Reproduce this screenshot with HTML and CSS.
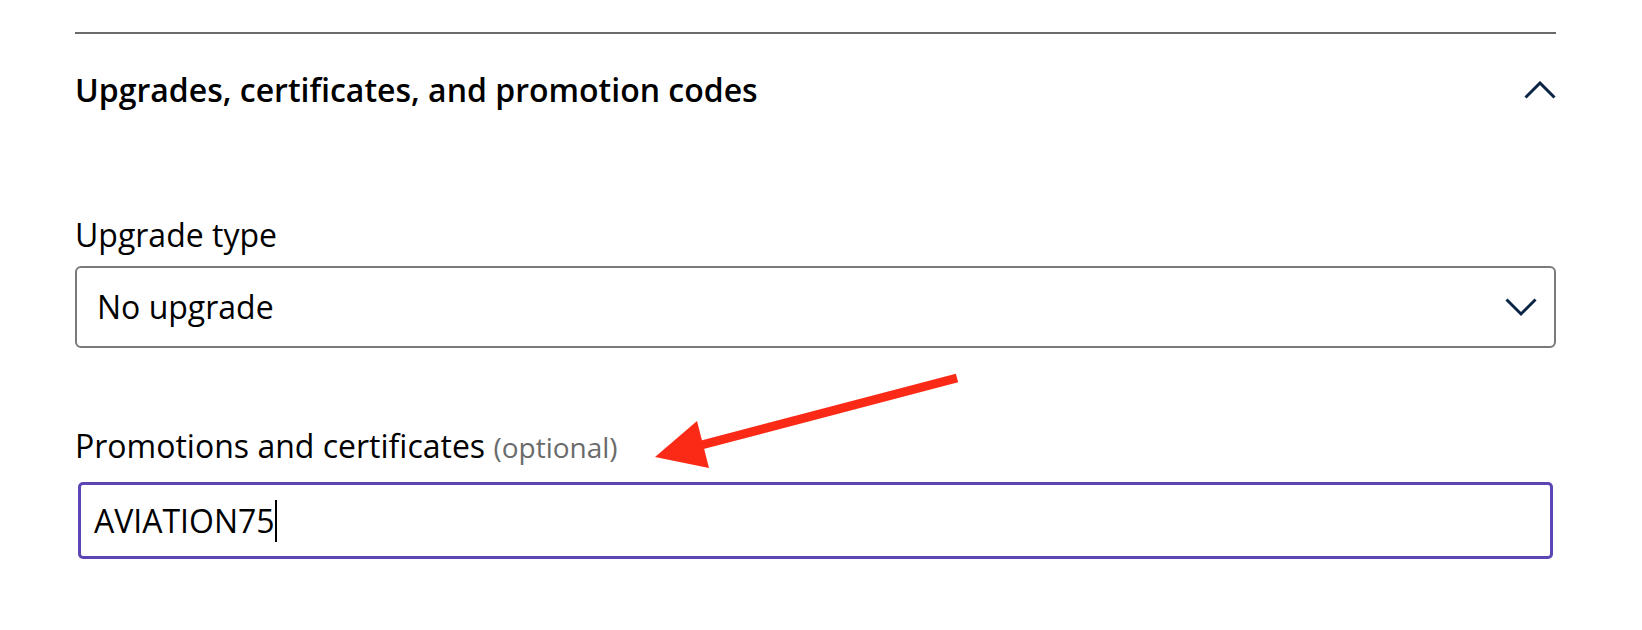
FILE: index.html
```html
<!DOCTYPE html>
<html lang="en">
<head>
<meta charset="utf-8">
<title>Upgrades, certificates, and promotion codes</title>
<link rel="stylesheet" href="styles.css">
</head>
<body>
<div class="page">
  <section class="section">
    <div class="rule"></div>
    <div class="header">
      <h2 class="title">Upgrades, certificates, and promotion codes</h2>
      <svg class="chev-up" width="32" height="18" viewBox="0 0 32 18" aria-hidden="true">
        <polyline points="1.5,16.5 16,2 30.5,16.5" fill="none" stroke="#0b2545" stroke-width="3"/>
      </svg>
    </div>
    <div class="field field-select">
      <label class="label">Upgrade type</label>
      <div class="select">
        <span class="value">No upgrade</span>
        <svg class="chev-down" width="32" height="19" viewBox="0 0 32 19" aria-hidden="true">
          <polyline points="1.5,1.5 16,16 30.5,1.5" fill="none" stroke="#0b2545" stroke-width="3"/>
        </svg>
      </div>
    </div>
    <div class="field field-input">
      <label class="label">Promotions and certificates <span class="optional">(optional)</span></label>
      <div class="input">
        <span class="value">AVIATION75</span><span class="caret"></span>
      </div>
    </div>
  </section>
  <svg class="arrow" width="1642" height="630" viewBox="0 0 1642 630" aria-hidden="true">
    <line x1="957" y1="378" x2="690" y2="448" stroke="#fb2a17" stroke-width="9"/>
    <polygon points="655,457 697,421 709,468" fill="#fb2a17"/>
  </svg>
</div>
</body>
</html>
```

FILE: styles.css
```css
html, body {
  margin: 0;
  padding: 0;
  background: #ffffff;
}

.page {
  position: relative;
  width: 1642px;
  height: 630px;
  overflow: hidden;
  font-family: "Open Sans", "Noto Sans", sans-serif;
  color: #000000;
}

.section {
  margin-left: 75px;
  width: 1481px;
  padding-top: 32px;
}

.rule {
  height: 2px;
  background: #6b6b6b;
}

.header {
  height: 112px;
  display: flex;
  align-items: center;
  justify-content: space-between;
}

.title {
  margin: 0;
  font-size: 32px;
  font-weight: 600;
  line-height: 40px;
}

.chev-up {
  display: block;
}

.field {
  display: flex;
  flex-direction: column;
}

.field-select {
  margin-top: 69px;
}

.field-input {
  margin-top: 78px;
}

.label {
  font-size: 32px;
  line-height: 40px;
  margin-bottom: 11px;
}

.field-input .label {
  margin-bottom: 15px;
}

.optional {
  color: #6b6b6b;
  font-size: 28px;
}

.select {
  height: 82px;
  box-sizing: border-box;
  border: 2px solid #7a7a7a;
  border-radius: 6px;
  display: flex;
  align-items: center;
  justify-content: space-between;
  padding: 0 17px 0 20px;
}

.value {
  font-size: 32px;
  line-height: 40px;
}

.input {
  height: 77px;
  margin: 0 3px;
  box-sizing: border-box;
  border: 3.5px solid #5e45b4;
  border-radius: 5px;
  display: flex;
  align-items: center;
  padding: 0 0 0 13px;
}

.caret {
  display: block;
  width: 2px;
  height: 42px;
  background: #000000;
  margin-left: 0;
}

.arrow {
  position: absolute;
  left: 0;
  top: 0;
  pointer-events: none;
}
```
